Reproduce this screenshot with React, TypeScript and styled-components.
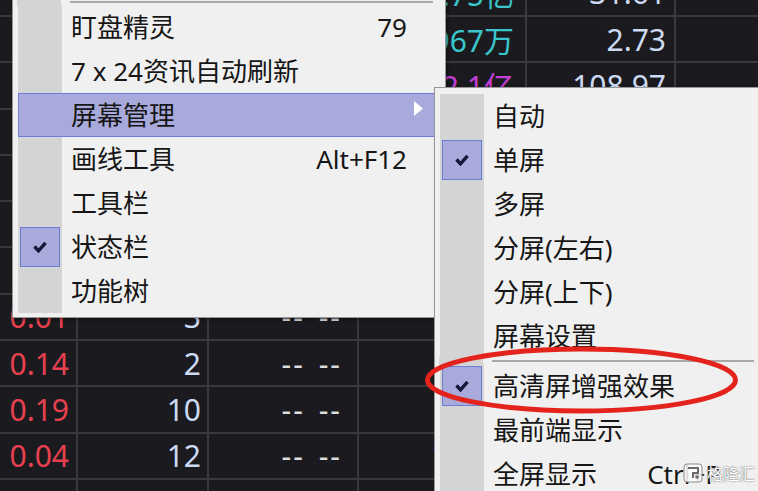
import React from 'react';
import styled, { createGlobalStyle } from 'styled-components';

type Tone = 'red' | 'blue' | 'dash' | 'cyan' | 'magenta';

type QuoteRow = {
  chg: string;
  vol: string;
  amt: string;
  amtTone: Tone;
  price: string;
};

type MenuEntry =
  | { kind: 'sep' }
  | {
      kind: 'item';
      label: string;
      accel?: string;
      checked?: boolean;
      active?: boolean;
      sub?: boolean;
    };

// rows 0-6 sit under the menus, only their right-hand columns peek out
const rows: QuoteRow[] = [
  { chg: '', vol: '5', amt: '1.75亿', amtTone: 'cyan', price: '31.61' },
  { chg: '', vol: '7', amt: '967万', amtTone: 'cyan', price: '2.73' },
  { chg: '', vol: '4', amt: '2.1亿', amtTone: 'magenta', price: '108.97' },
  { chg: '', vol: '6', amt: '3.42亿', amtTone: 'cyan', price: '12.08' },
  { chg: '', vol: '9', amt: '845万', amtTone: 'magenta', price: '6.54' },
  { chg: '', vol: '8', amt: '1.06亿', amtTone: 'cyan', price: '23.90' },
  { chg: '', vol: '1', amt: '598万', amtTone: 'cyan', price: '4.12' },
  { chg: '0.01', vol: '3', amt: '1.3亿', amtTone: 'cyan', price: '17.35' },
  { chg: '0.14', vol: '2', amt: '843万', amtTone: 'cyan', price: '9.86' },
  { chg: '0.19', vol: '10', amt: '512万', amtTone: 'magenta', price: '5.27' },
  { chg: '0.04', vol: '12', amt: '706万', amtTone: 'magenta', price: '3.48' },
  { chg: '0.03', vol: '6', amt: '1.2亿', amtTone: 'cyan', price: '14.02' },
];

const mainMenu: MenuEntry[] = [
  { kind: 'sep' },
  { kind: 'item', label: '盯盘精灵', accel: '79' },
  { kind: 'item', label: '7 x 24资讯自动刷新' },
  { kind: 'item', label: '屏幕管理', active: true, sub: true },
  { kind: 'item', label: '画线工具', accel: 'Alt+F12' },
  { kind: 'item', label: '工具栏' },
  { kind: 'item', label: '状态栏', checked: true },
  { kind: 'item', label: '功能树' },
];

const screenMenu: MenuEntry[] = [
  { kind: 'item', label: '自动' },
  { kind: 'item', label: '单屏', checked: true },
  { kind: 'item', label: '多屏' },
  { kind: 'item', label: '分屏(左右)' },
  { kind: 'item', label: '分屏(上下)' },
  { kind: 'item', label: '屏幕设置' },
  { kind: 'sep' },
  { kind: 'item', label: '高清屏增强效果', checked: true },
  { kind: 'item', label: '最前端显示' },
  { kind: 'item', label: '全屏显示', accel: 'Ctrl+P' },
];

const toneColor: Record<Tone, string> = {
  red: '#e8404f',
  blue: '#cddaf3',
  dash: '#dedede',
  cyan: '#39c6cc',
  magenta: '#c23ed4',
};

const GlobalStyle = createGlobalStyle`
  html, body {
    margin: 0;
    padding: 0;
  }
  body {
    background: #1b1b1f;
    font-family: "Noto Sans", "Noto Sans CJK SC", sans-serif;
    overflow: hidden;
  }
`;

const Screen = styled.div`
  position: relative;
  width: 758px;
  height: 491px;
  overflow: hidden;
  background: #1b1b1f;
`;

const QuoteGrid = styled.div`
  display: grid;
  grid-template-columns: 76px 129px 148px 166px 147px 1fr;
  grid-auto-rows: 44.3px;
  gap: 2px;
  margin-top: -29.3px;
  background: #39393d;
`;

const Cell = styled.div<{ $tone: Tone; $pad: number }>`
  display: flex;
  align-items: center;
  justify-content: flex-end;
  padding-right: ${(p) => p.$pad}px;
  background: #1b1b1f;
  color: ${(p) => toneColor[p.$tone]};
  font-size: 30px;
  white-space: nowrap;
  overflow: hidden;
`;

const Dashes = styled.span`
  letter-spacing: 2px;
  word-spacing: 4px;
`;

const Menu = styled.div<{ $left: number; $top: number; $width: number; $padTop: number }>`
  position: absolute;
  left: ${(p) => p.$left}px;
  top: ${(p) => p.$top}px;
  width: ${(p) => p.$width}px;
  box-sizing: border-box;
  padding: ${(p) => p.$padTop}px 5px 4px;
  background: #f0f0f0;
  border: 1px solid #979797;
  box-shadow: 2px 2px 3px rgba(0, 0, 0, 0.35);
  color: #161616;
  font-size: 26px;
  z-index: 2;
`;

const Item = styled.div<{ $active?: boolean }>`
  display: flex;
  align-items: center;
  height: 44px;
  box-sizing: border-box;
  background: ${(p) => (p.$active ? '#a9aadc' : 'transparent')};
  border: 1px solid ${(p) => (p.$active ? '#6c7fd6' : 'transparent')};
`;

const Gutter = styled.div<{ $active?: boolean }>`
  display: flex;
  align-items: center;
  justify-content: center;
  align-self: stretch;
  width: 44px;
  flex: none;
  margin: -1px 0 -1px -1px;
  background: ${(p) => (p.$active ? 'transparent' : '#d4d4d4')};
`;

const CheckBox = styled.div`
  display: flex;
  align-items: center;
  justify-content: center;
  width: 40px;
  height: 40px;
  box-sizing: border-box;
  background: #a9aadc;
  border: 1px solid #6c7fd6;
`;

const Label = styled.span`
  flex: 1;
  padding-left: 9px;
  white-space: nowrap;
  line-height: 1;
`;

const Accel = styled.span`
  white-space: nowrap;
  line-height: 1;
`;

const ArrowSlot = styled.div<{ $width: number }>`
  display: flex;
  align-items: center;
  width: ${(p) => p.$width}px;
  flex: none;
  padding-left: 7px;
  box-sizing: border-box;
  transform: translateY(-7px);
`;

const SepRow = styled.div`
  display: flex;
  height: 6px;
`;

const SepLine = styled.div`
  flex: 1;
  align-self: center;
  height: 2px;
  margin: 0 7px 0 9px;
  background: #a9a9a9;
`;

const Ring = styled.svg`
  position: absolute;
  left: 420px;
  top: 340px;
  z-index: 3;
  overflow: visible;
`;

const Watermark = styled.div`
  position: absolute;
  left: 683px;
  top: 463px;
  display: flex;
  align-items: center;
  gap: 4px;
  z-index: 4;
  color: #ffffff;
  font-family: "Noto Sans CJK SC", sans-serif;
  font-size: 16px;
  line-height: 1;
  text-shadow: 0 0 1px #666, 0 0 2px #888;
`;

const CheckIcon = () => (
  <svg width="14" height="12" viewBox="0 0 14 12">
    <path d="M1.5 5.5 L5.5 9.8 L12.5 1.8" fill="none" stroke="#17173a" strokeWidth="3.4" />
  </svg>
);

const SubArrow = () => (
  <svg width="9" height="15" viewBox="0 0 9 15">
    <polygon points="0,0 9,7.5 0,15" fill="#ffffff" />
  </svg>
);

const WatermarkLogo = () => (
  <svg width="20" height="20" viewBox="0 0 20 20">
    <rect x="1" y="1" width="18" height="18" rx="3" fill="rgba(255,255,255,0.85)" stroke="#888" strokeWidth="1" />
    <path d="M5 5 H15 V10 H10 V15" fill="none" stroke="#6a6a6a" strokeWidth="2" />
    <circle cx="14" cy="14" r="1.8" fill="#6a6a6a" />
  </svg>
);

const MenuList = ({
  entries,
  left,
  top,
  width,
  padTop,
  tailWidth,
}: {
  entries: MenuEntry[];
  left: number;
  top: number;
  width: number;
  padTop: number;
  tailWidth: number;
}) => (
  <Menu $left={left} $top={top} $width={width} $padTop={padTop}>
    {entries.map((entry, index) =>
      entry.kind === 'sep' ? (
        <SepRow key={`sep-${index}`}>
          <Gutter />
          <SepLine />
        </SepRow>
      ) : (
        <Item key={entry.label} $active={entry.active}>
          <Gutter $active={entry.active}>
            {entry.checked && (
              <CheckBox>
                <CheckIcon />
              </CheckBox>
            )}
          </Gutter>
          <Label>{entry.label}</Label>
          {entry.accel && <Accel>{entry.accel}</Accel>}
          <ArrowSlot $width={tailWidth}>{entry.sub && <SubArrow />}</ArrowSlot>
        </Item>
      ),
    )}
  </Menu>
);

const App = () => (
  <Screen>
    <GlobalStyle />
    <QuoteGrid>
      {rows.map((row, index) => (
        <React.Fragment key={index}>
          <Cell $tone="red" $pad={7}>{row.chg}</Cell>
          <Cell $tone="blue" $pad={6}>{row.vol}</Cell>
          <Cell $tone="dash" $pad={15}>
            <Dashes>-- --</Dashes>
          </Cell>
          <Cell $tone={row.amtTone} $pad={11}>{row.amt}</Cell>
          <Cell $tone="blue" $pad={8}>{row.price}</Cell>
          <Cell $tone="blue" $pad={8} />
        </React.Fragment>
      ))}
    </QuoteGrid>

    <MenuList entries={mainMenu} left={12} top={-6} width={434} padTop={4} tailWidth={32} />
    <MenuList entries={screenMenu} left={434} top={87} width={333} padTop={6} tailWidth={39} />

    <Ring width="330" height="80" viewBox="0 0 330 80">
      <ellipse cx="161.5" cy="40" rx="154" ry="31" fill="none" stroke="#e3231c" strokeWidth="5" />
    </Ring>

    <Watermark>
      <WatermarkLogo />
      <span>格隆汇</span>
    </Watermark>
  </Screen>
);

export default App;
